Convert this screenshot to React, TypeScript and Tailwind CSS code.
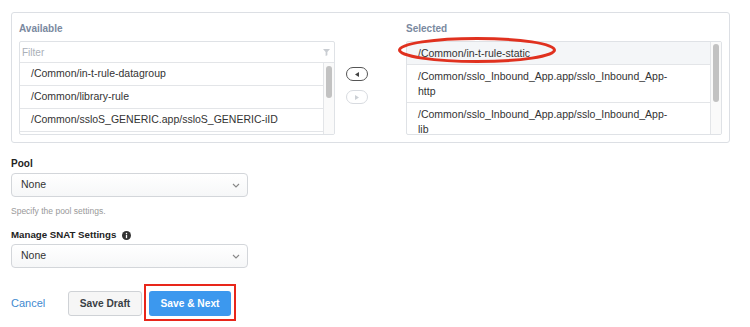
import React from "react";

const font = { fontFamily: '"Liberation Sans", Arial, Helvetica, sans-serif' };

function Scroll({ top, h }: { top: number; h: number }) {
  return (
    <div className="w-[11px] shrink-0 border-l border-[#e3e5e8] bg-[#fafafa] flex justify-center">
      <div className="w-[6px] rounded-full bg-[#c2c2c2]" style={{ marginTop: top, height: h }} />
    </div>
  );
}

function Select() {
  return (
    <div className="mt-[2px] w-[237px] h-[24px] border border-[#d3d6da] rounded-[4px] bg-gradient-to-b from-white to-[#f6f7f8] flex items-center justify-between pl-[9px] pr-[7px]">
      <span className="text-[10.5px] text-[#333]">None</span>
      <svg width="8" height="5" viewBox="0 0 8 5"><path d="M1 1 L4 4 L7 1" fill="none" stroke="#888" strokeWidth="1.1" /></svg>
    </div>
  );
}

export default function App() {
  return (
    <div style={font} className="w-[750px] h-[327px] bg-white relative overflow-hidden text-[#333]">
      <div className="ml-[11px] mt-[12px] w-[719px] h-[131px] border border-[#dcdfe4] rounded-[3px] flex pt-[9px] pl-[7px]">
        {/* Available */}
        <div className="w-[316px] flex flex-col">
          <div className="text-[10px] font-bold text-[#7a89a0] h-[19px] leading-[14px]">Available</div>
          <div className="border border-[#dfe2e6] rounded-[2px] h-[94px] flex flex-col overflow-hidden">
            <div className="h-[21px] shrink-0 border-b border-[#e3e5e8] flex items-center justify-between pl-[2px] pr-[4px]">
              <span className="text-[10px] text-[#aab0b8]">Filter</span>
              <svg width="7" height="7" viewBox="0 0 8 8"><path d="M0 0 H8 L5 3.5 V7 L3 8 V3.5 Z" fill="#c9cdd2" /></svg>
            </div>
            <div className="flex flex-1 min-h-0">
              <div className="flex-1 flex flex-col text-[10.5px]">
                <div className="h-[23px] shrink-0 border-b border-[#e3e5e8] flex items-center pl-[11px]">/Common/in-t-rule-datagroup</div>
                <div className="h-[23px] shrink-0 border-b border-[#e3e5e8] flex items-center pl-[11px]">/Common/library-rule</div>
                <div className="h-[23px] shrink-0 border-b border-[#e3e5e8] flex items-center pl-[11px]">/Common/ssloS_GENERIC.app/ssloS_GENERIC-iID</div>
              </div>
              <Scroll top={3} h={32} />
            </div>
          </div>
        </div>
        {/* move buttons */}
        <div className="w-[71px] pl-[11px] pt-[45px] flex flex-col gap-[9px]">
          <div className="w-[22px] h-[14px] rounded-full border border-[#555] flex items-center justify-center">
            <svg width="4" height="5" viewBox="0 0 4 5"><path d="M4 0 V5 L0 2.5 Z" fill="#444" /></svg>
          </div>
          <div className="w-[22px] h-[14px] rounded-full border border-[#d8dbe0] flex items-center justify-center">
            <svg width="4" height="5" viewBox="0 0 4 5"><path d="M0 0 V5 L4 2.5 Z" fill="#ccd0d5" /></svg>
          </div>
        </div>
        {/* Selected */}
        <div className="w-[316px] flex flex-col">
          <div className="text-[10px] font-bold text-[#7a89a0] h-[19px] leading-[14px]">Selected</div>
          <div className="border border-[#dfe2e6] rounded-[2px] h-[94px] flex overflow-hidden">
            <div className="flex-1 flex flex-col text-[10.5px] leading-[15px]">
              <div className="h-[23px] shrink-0 bg-[#f4f6f8] border-b border-[#e3e5e8] flex items-center pl-[11px]">/Common/in-t-rule-static</div>
              <div className="h-[38px] shrink-0 border-b border-[#e3e5e8] flex flex-col justify-center pl-[11px]">
                <span>/Common/sslo_Inbound_App.app/sslo_Inbound_App-</span>
                <span>http</span>
              </div>
              <div className="h-[38px] shrink-0 flex flex-col justify-center pl-[11px]">
                <span>/Common/sslo_Inbound_App.app/sslo_Inbound_App-</span>
                <span>lib</span>
              </div>
            </div>
            <Scroll top={2} h={58} />
          </div>
        </div>
      </div>

      {/* red ellipse annotation */}
      <svg className="absolute left-[397px] top-[36px]" width="162" height="28" viewBox="0 0 162 28">
        <ellipse cx="80" cy="14" rx="77.5" ry="11.5" fill="none" stroke="#e0311f" strokeWidth="3" />
      </svg>

      <div className="pl-[11px]">
        <div className="mt-[14px] text-[10px] font-bold text-[#222] leading-[14px]">Pool</div>
        <Select />
        <div className="mt-[8px] text-[8.5px] text-[#999] leading-[12px]">Specify the pool settings.</div>
        <div className="mt-[11px] flex items-center gap-[6px] text-[9.7px] font-bold text-[#222] leading-[14px]">
          Manage SNAT Settings
          <svg width="9" height="9" viewBox="0 0 10 10"><circle cx="5" cy="5" r="5" fill="#333" /><rect x="4.3" y="4.2" width="1.4" height="3.8" fill="#fff" /><circle cx="5" cy="2.8" r="0.8" fill="#fff" /></svg>
        </div>
        <Select />
        <div className="mt-[16px] flex items-start">
          <span className="mt-[12px] text-[11px] leading-[14px] text-[#3f8ad0] w-[57px]">Cancel</span>
          <div className="mt-[7px] w-[74px] h-[25px] border border-[#cfd2d6] rounded-[3px] bg-[#f6f6f6] flex items-center justify-center text-[10.2px] font-bold text-[#3a3f45]">Save Draft</div>
          <div className="ml-[2px] pt-[5px] pb-[3px] px-[3px] border-[2px] border-[#e8261a]">
            <div className="w-[82px] h-[25px] rounded-[3px] bg-[#3c98ee] flex items-center justify-center text-[10.2px] font-bold text-white">Save &amp; Next</div>
          </div>
        </div>
      </div>
    </div>
  );
}
